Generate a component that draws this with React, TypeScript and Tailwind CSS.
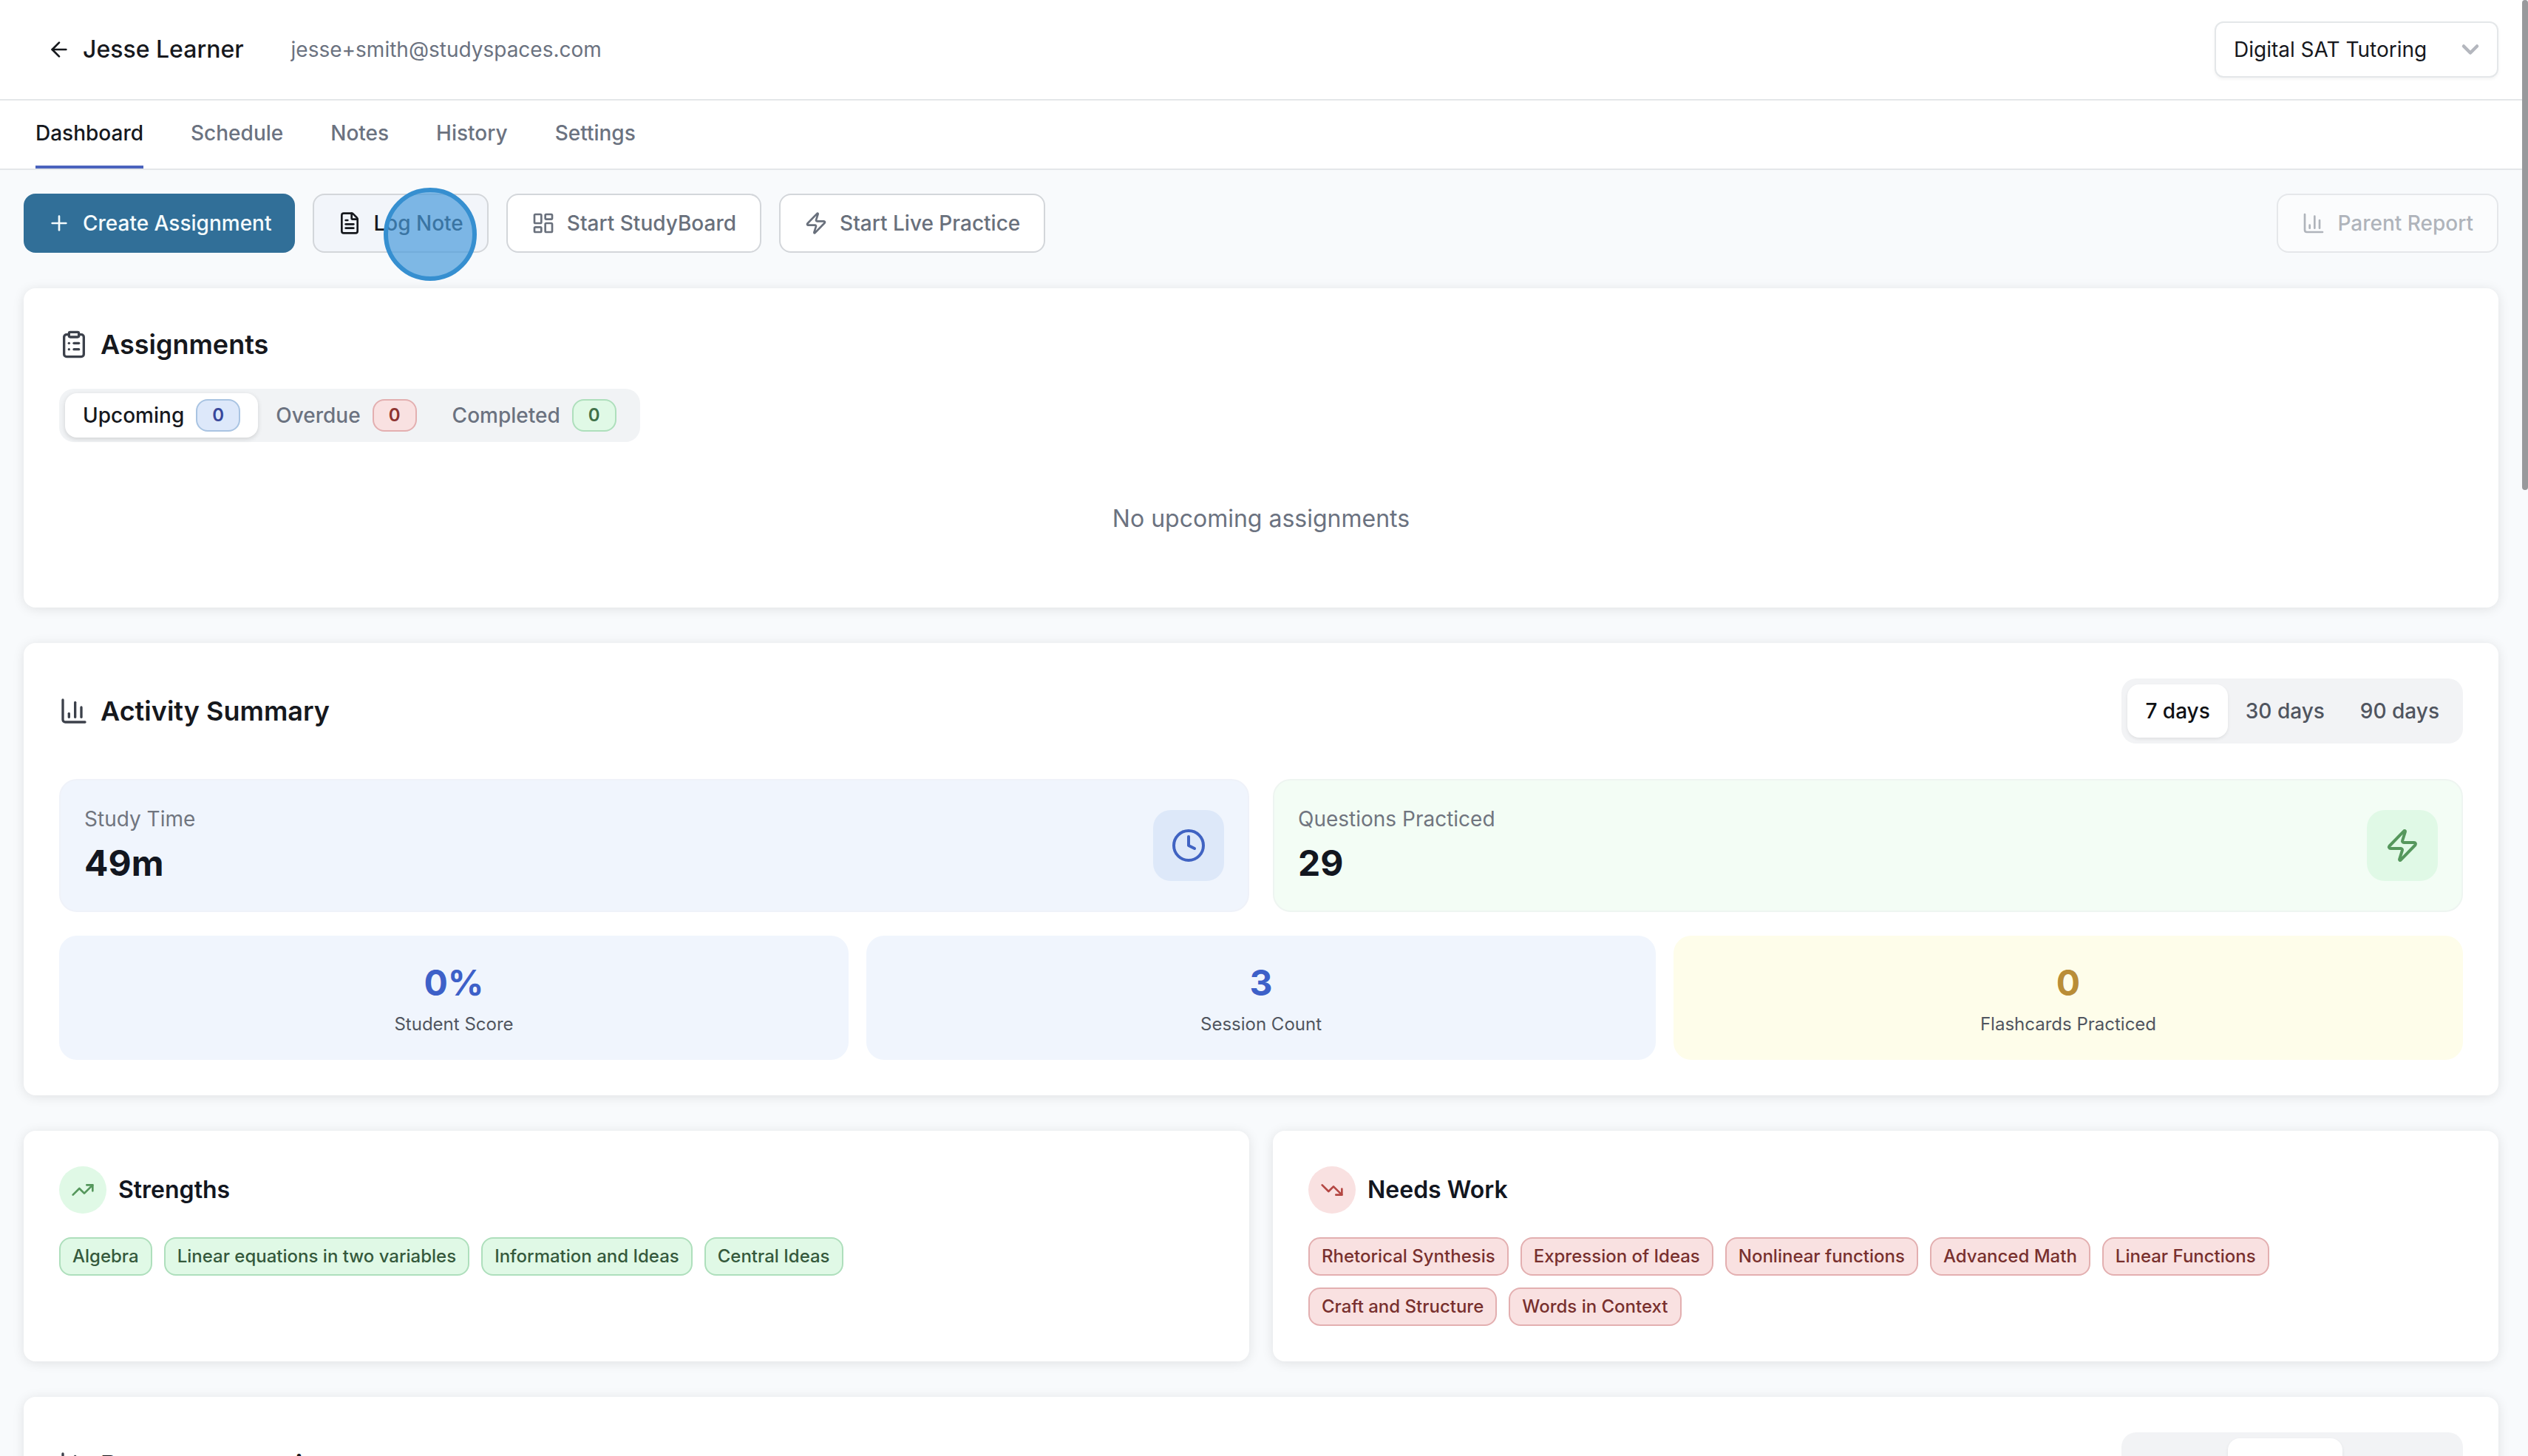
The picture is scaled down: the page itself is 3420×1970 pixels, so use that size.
import { useState } from "react";
import type { ReactNode } from "react";
import {
  ArrowLeft,
  ChartColumn,
  ChevronDown,
  ClipboardList,
  Clock,
  FileText,
  LayoutDashboard,
  Plus,
  TrendingDown,
  TrendingUp,
  Zap,
} from "lucide-react";

const NAV_TABS = ["Dashboard", "Schedule", "Notes", "History", "Settings"];

const ASSIGNMENT_TABS = [
  { label: "Upcoming", count: 0, badge: "bg-[#dde8fa] border-[#a9c4e2] text-[#37479b]" },
  { label: "Overdue", count: 0, badge: "bg-[#f9e1e1] border-[#e3afb0] text-[#8d3330]" },
  { label: "Completed", count: 0, badge: "bg-[#e0f9e6] border-[#aedfbc] text-[#3f7048]" },
];

const RANGES = ["7 days", "30 days", "90 days"];

const STRENGTHS = [
  "Algebra",
  "Linear equations in two variables",
  "Information and Ideas",
  "Central Ideas",
];

const NEEDS_WORK = [
  "Rhetorical Synthesis",
  "Expression of Ideas",
  "Nonlinear functions",
  "Advanced Math",
  "Linear Functions",
  "Craft and Structure",
  "Words in Context",
];

// ── Shared pieces ────────────────────────────────────────────

function Card({ children }: { children: ReactNode }) {
  return (
    <section className="rounded-2xl bg-white p-12 shadow-[0_2px_16px_rgba(0,0,0,0.1)]">
      {children}
    </section>
  );
}

function CardTitle({ icon, children }: { icon: ReactNode; children: ReactNode }) {
  return (
    <h2 className="flex items-center gap-4 text-[36px] leading-14 font-semibold text-[#16181d]">
      {icon}
      {children}
    </h2>
  );
}

function OutlineButton({
  icon,
  children,
  active = false,
  disabled = false,
}: {
  icon: ReactNode;
  children: ReactNode;
  active?: boolean;
  disabled?: boolean;
}) {
  return (
    <button
      type="button"
      disabled={disabled}
      className={`flex h-20 items-center gap-4 rounded-2xl border-2 border-[#d3d6da] px-8 text-[28px] leading-10 font-medium disabled:opacity-50 ${
        active ? "bg-[#f2f5fa] text-[#16181d]" : "bg-white text-[#69707c]"
      }`}
    >
      {icon}
      {children}
    </button>
  );
}

function RangeToggle({ initial }: { initial: string }) {
  const [range, setRange] = useState(initial);
  return (
    <div className="flex rounded-[20px] bg-[#f2f3f5] p-2">
      {RANGES.map((r) => (
        <button
          key={r}
          type="button"
          onClick={() => setRange(r)}
          className={`h-18 rounded-2xl px-6 text-[28px] leading-10 font-medium ${
            r === range
              ? "bg-white text-[#0f1115] shadow-[0_2px_4px_rgba(0,0,0,0.08)]"
              : "text-[#50555f]"
          }`}
        >
          {r}
        </button>
      ))}
    </div>
  );
}

function TopicCard({
  title,
  icon,
  iconClass,
  tagClass,
  topics,
}: {
  title: string;
  icon: ReactNode;
  iconClass: string;
  tagClass: string;
  topics: string[];
}) {
  return (
    <Card>
      <div className="flex items-center gap-4">
        <span className={`flex size-16 items-center justify-center rounded-full ${iconClass}`}>
          {icon}
        </span>
        <h3 className="text-[32px] leading-12 font-semibold text-[#12161f]">{title}</h3>
      </div>
      <ul className="mt-8 flex flex-wrap gap-4">
        {topics.map((topic) => (
          <li
            key={topic}
            className={`rounded-2xl border-2 px-4 py-2 text-[24px] leading-8 font-medium ${tagClass}`}
          >
            {topic}
          </li>
        ))}
      </ul>
    </Card>
  );
}

// ── Page ─────────────────────────────────────────────────────

export default function App() {
  const [tab, setTab] = useState("Upcoming");

  return (
    <div className="relative h-screen overflow-hidden bg-[#f8fafc] pr-2 font-[Inter,sans-serif] text-[28px] leading-10">
      {/* Header */}
      <header className="flex h-34 items-center justify-between border-b-2 border-[#e4e7e9] bg-white px-8">
        <div className="flex items-center gap-16">
          <a href="#students" className="flex items-center gap-4 pl-8 text-[32px] font-medium text-[#16181d]">
            <ArrowLeft className="size-8" />
            Jesse Learner
          </a>
          <span className="text-[#6b7280]">jesse+smith@studyspaces.com</span>
        </div>
        <div className="relative">
          <select
            aria-label="Program"
            className="h-19 w-96 appearance-none rounded-xl border-2 border-[#e4e7e9] bg-white pl-6 text-[#16181d] shadow-[0_2px_4px_rgba(0,0,0,0.05)]"
          >
            <option>Digital SAT Tutoring</option>
          </select>
          <ChevronDown
            strokeWidth={3}
            className="pointer-events-none absolute inset-y-0 right-5 my-auto size-9 text-[#b4b7be]"
          />
        </div>
      </header>

      {/* Section nav */}
      <nav className="flex h-[94px] gap-16 border-b-2 border-[#e4e7e9] bg-white px-12 font-medium">
        {NAV_TABS.map((name, i) => (
          <a
            key={name}
            href={`#${name.toLowerCase()}`}
            className={`flex items-center border-b-4 ${
              i === 0 ? "border-[#4a63bd] text-[#16181d]" : "border-transparent text-[#6b7280]"
            }`}
          >
            {name}
          </a>
        ))}
      </nav>

      <main className="flex flex-col gap-12 p-8">
        {/* Actions */}
        <div className="flex items-center gap-6">
          <button
            type="button"
            className="flex h-20 items-center gap-4 rounded-2xl bg-[#316f98] px-8 font-medium text-[#f4fbfd]"
          >
            <Plus className="size-8" />
            Create Assignment
          </button>
          <div className="relative">
            <OutlineButton active icon={<FileText className="size-8" />}>
              Log Note
            </OutlineButton>
            {/* Click marker */}
            <span className="pointer-events-none absolute -top-2 right-4 size-[126px] rounded-full border-6 border-[#368fd0] bg-[#4a9bdc]/70" />
          </div>
          <OutlineButton icon={<LayoutDashboard className="size-8" />}>Start StudyBoard</OutlineButton>
          <OutlineButton icon={<Zap className="size-8" />}>Start Live Practice</OutlineButton>
          <div className="ml-auto">
            <OutlineButton disabled icon={<ChartColumn className="size-8" />}>
              Parent Report
            </OutlineButton>
          </div>
        </div>

        {/* Assignments */}
        <Card>
          <CardTitle icon={<ClipboardList className="size-10 text-[#3c414b]" />}>Assignments</CardTitle>
          <div role="tablist" className="mt-8 flex h-18 w-fit items-center rounded-[20px] bg-[#f1f3f5] px-2">
            {ASSIGNMENT_TABS.map((t) => (
              <button
                key={t.label}
                type="button"
                role="tab"
                aria-selected={t.label === tab}
                onClick={() => setTab(t.label)}
                className={`flex h-15 items-center gap-4 rounded-2xl px-6 font-medium ${
                  t.label === tab
                    ? "bg-white text-[#16181d] shadow-[0_2px_6px_rgba(0,0,0,0.14)]"
                    : "text-[#6b7280]"
                }`}
              >
                {t.label}
                <span
                  className={`flex h-11 w-15 items-center justify-center rounded-2xl border-2 text-[24px] leading-8 font-semibold ${t.badge}`}
                >
                  {t.count}
                </span>
              </button>
            ))}
          </div>
          <p className="mt-8 py-12 text-center text-[32px] leading-12 text-[#6b7280]">
            No {tab.toLowerCase()} assignments
          </p>
        </Card>

        {/* Activity summary */}
        <Card>
          <div className="flex items-center justify-between">
            <CardTitle icon={<ChartColumn className="size-10 text-[#3c414b]" />}>Activity Summary</CardTitle>
            <RangeToggle initial="7 days" />
          </div>

          <div className="mt-12 grid grid-cols-2 gap-8">
            <div className="flex items-center justify-between rounded-3xl border-2 border-[#eff2f9] bg-[#f0f5fd] p-8">
              <div>
                <p className="text-[#70757f]">Study Time</p>
                <p className="mt-2 text-[48px] leading-16 font-bold text-[#12161f]">49m</p>
              </div>
              <span className="flex size-24 items-center justify-center rounded-3xl bg-[#dde8f9] text-[#4063c2]">
                <Clock className="size-12" />
              </span>
            </div>
            <div className="flex items-center justify-between rounded-3xl border-2 border-[#eef5f1] bg-[#f3fdf5] p-8">
              <div>
                <p className="text-[#70757f]">Questions Practiced</p>
                <p className="mt-2 text-[48px] leading-16 font-bold text-[#12161f]">29</p>
              </div>
              <span className="flex size-24 items-center justify-center rounded-3xl bg-[#e0f9e6] text-[#55975c]">
                <Zap className="size-12" />
              </span>
            </div>
          </div>

          <div className="mt-8 grid grid-cols-3 gap-6 text-center text-[24px] leading-8 text-[#50555f]">
            <div className="rounded-3xl bg-[#f0f5fd] p-8">
              <p className="text-[48px] leading-16 font-bold text-[#3d60c8]">0%</p>
              <p className="mt-2">Student Score</p>
            </div>
            <div className="rounded-3xl bg-[#f0f5fd] p-8">
              <p className="text-[48px] leading-16 font-bold text-[#3d60c8]">3</p>
              <p className="mt-2">Session Count</p>
            </div>
            <div className="rounded-3xl bg-[#fefdea] p-8">
              <p className="text-[48px] leading-16 font-bold text-[#b98d37]">0</p>
              <p className="mt-2">Flashcards Practiced</p>
            </div>
          </div>
        </Card>

        {/* Topics */}
        <div className="grid grid-cols-2 gap-8">
          <TopicCard
            title="Strengths"
            icon={<TrendingUp className="size-8" />}
            iconClass="bg-[#e0f9e6] text-[#55975c]"
            tagClass="border-[#aedfbc] bg-[#e0f9e6] text-[#35593c]"
            topics={STRENGTHS}
          />
          <TopicCard
            title="Needs Work"
            icon={<TrendingDown className="size-8" />}
            iconClass="bg-[#f9e1e1] text-[#b44743]"
            tagClass="border-[#e3afb0] bg-[#f9e1e1] text-[#78302e]"
            topics={NEEDS_WORK}
          />
        </div>

        {/* Progress */}
        <Card>
          <div className="flex items-center justify-between">
            <CardTitle icon={<ChartColumn className="size-10 text-[#3c414b]" />}>Progress over time</CardTitle>
            <RangeToggle initial="30 days" />
          </div>
        </Card>
      </main>

      {/* Scroll thumb */}
      <div className="absolute top-0 right-0 h-[663px] w-2 rounded-full bg-[#98999c]" />
    </div>
  );
}
